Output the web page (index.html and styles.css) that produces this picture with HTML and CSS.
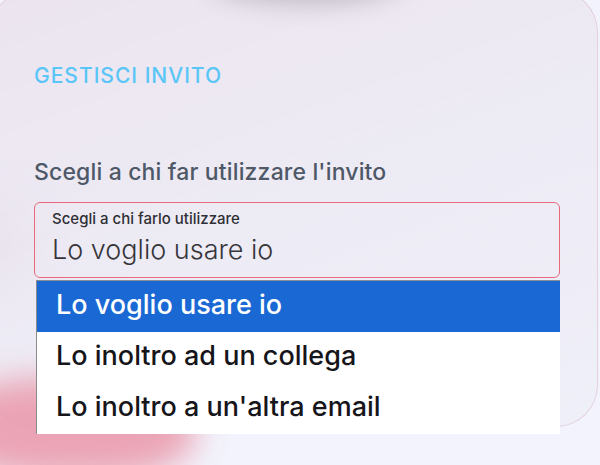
FILE: index.html
```html
<!DOCTYPE html>
<html lang="it">
<head>
<meta charset="utf-8">
<title>Gestisci invito</title>
<link rel="stylesheet" href="styles.css">
</head>
<body>
  <div class="blob blob-pink"></div>
  <div class="blob blob-side"></div>
  <section class="card">
    <div class="blob blob-top"></div>
    <h2 class="title">GESTISCI INVITO</h2>
    <p class="subtitle">Scegli a chi far utilizzare l'invito</p>
    <div class="field">
      <div class="select">
        <span class="select-label">Scegli a chi farlo utilizzare</span>
        <span class="select-value">Lo voglio usare io</span>
      </div>
      <ul class="dropdown">
        <li class="option option-active">Lo voglio usare io</li>
        <li class="option">Lo inoltro ad un collega</li>
        <li class="option">Lo inoltro a un'altra email</li>
      </ul>
    </div>
  </section>
</body>
</html>
```
FILE: styles.css
```css
html, body {
  margin: 0;
  padding: 0;
}
body {
  width: 600px;
  height: 465px;
  overflow: hidden;
  position: relative;
  background: #f2f3fc;
  font-family: Inter, "Open Sans", sans-serif;
}
.blob {
  position: absolute;
  border-radius: 50%;
  pointer-events: none;
}
.blob-pink {
  z-index: 1;
  left: -50px;
  top: 378px;
  width: 245px;
  height: 100px;
  border-radius: 40%;
  background: #ea97a9;
  opacity: 0.85;
  filter: blur(16px);
}
.blob-side {
  left: -60px;
  top: 200px;
  width: 90px;
  height: 90px;
  background: #d9cdd6;
  filter: blur(20px);
}
.card {
  position: relative;
  box-sizing: border-box;
  width: 608px;
  height: 437px;
  margin: -10px 0 0 -10px;
  padding: 73px 37px 0 43px;
  border-radius: 42px;
  border: 1px solid rgba(226, 206, 218, 0.9);
  background: linear-gradient(160deg, rgba(234, 226, 236, 0.88) 0%, rgba(236, 232, 242, 0.85) 45%, rgba(239, 238, 248, 0.85) 100%);
}
.blob-top {
  left: 220px;
  top: -30px;
  width: 190px;
  height: 42px;
  background: #bdb8c2;
  filter: blur(12px);
}
.title {
  margin: 0;
  font-size: 21px;
  line-height: 24px;
  font-weight: 500;
  letter-spacing: 1px;
  color: #5ac6f8;
}
.subtitle {
  margin: 69px 0 0;
  font-size: 23px;
  line-height: 30px;
  font-weight: 500;
  letter-spacing: 0.15px;
  color: #4e5867;
}
.field {
  position: relative;
  margin-top: 15px;
}
.select {
  display: flex;
  flex-direction: column;
  height: 76px;
  box-sizing: border-box;
  border: 1px solid #e8687c;
  border-radius: 6px;
  padding: 7px 16px 0 17px;
}
.select-label {
  font-size: 15px;
  line-height: 17px;
  font-weight: 500;
  color: #2f2f35;
}
.select-value {
  margin: 7px 0 0;
  font-size: 27px;
  line-height: 32px;
  font-weight: 300;
  color: #36353b;
}
.dropdown {
  position: absolute;
  z-index: 2;
  left: 2px;
  right: 0;
  top: 78px;
  margin: 0;
  padding: 0;
  list-style: none;
  border-top: 1px solid #8c8c8c;
  border-left: 1px solid #8c8c8c;
  background: #ffffff;
}
.option {
  height: 51px;
  box-sizing: border-box;
  padding: 0 0 4px 19px;
  font-size: 27px;
  line-height: 47px;
  font-weight: 500;
  color: #16151a;
}
.option-active {
  background: #1a68d3;
  color: #ffffff;
}
```
